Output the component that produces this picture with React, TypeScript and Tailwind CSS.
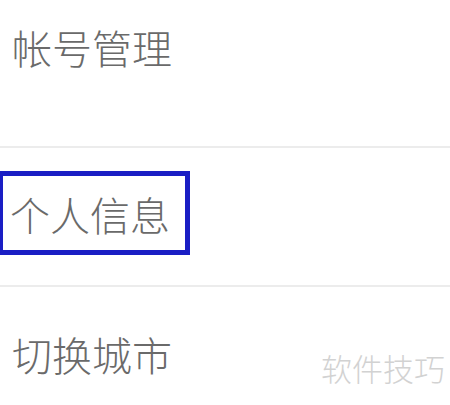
import React from "react";

const font = { fontFamily: '"Noto Sans CJK SC", "Noto Sans", sans-serif' };

const App: React.FC = () => {
  return (
    <div className="relative w-[450px] h-[405px] overflow-hidden bg-white" style={font}>
      {/* 帐号管理 */}
      <div className="h-[146px] pl-[12px] pt-[27px]">
        <span className="text-[40px] leading-[40px] font-light text-[#6a6a6a]">帐号管理</span>
      </div>
      <div className="h-[2px] bg-[#ececec]" />

      {/* 个人信息 (highlighted) */}
      <div className="h-[137px] pt-[23px]">
        <div className="ml-[-2px] w-[192px] h-[84px] border-[5px] border-[#1a1ec4] pl-[7px] pt-[18px]">
          <span className="text-[40px] leading-[40px] font-light text-[#6a6a6a]">个人信息</span>
        </div>
      </div>
      <div className="h-[2px] bg-[#ececec]" />

      {/* 切换城市 */}
      <div className="pl-[12px] pt-[47px]">
        <span className="text-[40px] leading-[40px] font-light text-[#6a6a6a]">切换城市</span>
      </div>

      {/* watermark */}
      <div className="absolute right-[5px] top-[352px] text-[31px] leading-[31px] font-light text-[#d2d2d2]">
        软件技巧
      </div>
    </div>
  );
};

export default App;
